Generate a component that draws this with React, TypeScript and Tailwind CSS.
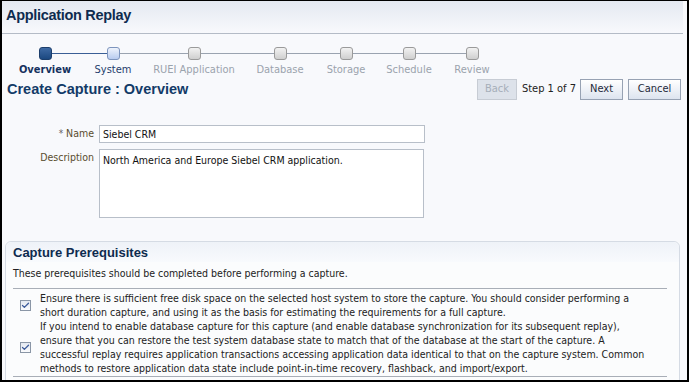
import { Check } from "lucide-react";

const steps = [
  { label: "Overview", state: "current", w: 70 },
  { label: "System", state: "next", w: 66 },
  { label: "RUEI Application", state: "off", w: 96 },
  { label: "Database", state: "off", w: 76 },
  { label: "Storage", state: "off", w: 56 },
  { label: "Schedule", state: "off", w: 70 },
  { label: "Review", state: "off", w: 56 },
];

const Box = ({ state }: { state: string }) => {
  if (state === "current")
    return <div className="w-[13px] h-[13px] rounded-[3px] border border-[#1d3f6c] bg-gradient-to-b from-[#3e6aa4] to-[#1b4880]" />;
  if (state === "next")
    return <div className="w-[13px] h-[13px] rounded-[3px] border border-[#7d94bd] bg-gradient-to-b from-[#eef3fc] to-[#b8cbef]" />;
  return <div className="w-[13px] h-[13px] rounded-[3px] border border-[#9a9a9a] bg-gradient-to-b from-[#f2f2f2] to-[#cfcfcf]" />;
};

const Train = () => (
  <div className="flex pl-[8px] pt-[13px]">
    {steps.map((s, i) => (
      <div key={s.label} className="relative flex flex-col items-center" style={{ width: s.w }}>
        {i < steps.length - 1 && (
          <div
            className={`absolute top-[6px] left-1/2 h-px ${i === 0 ? "bg-[#3a5f96]" : "bg-[#9aa3b0]"}`}
            style={{ width: s.w / 2 + steps[i + 1].w / 2 }}
          />
        )}
        <div className="relative z-10">
          <Box state={s.state} />
        </div>
        <div
          className={`mt-[3px] text-[11px] leading-[14px] whitespace-nowrap ${
            s.state === "current" ? "font-bold text-[#15315e]" : s.state === "next" ? "text-[#1f3d6c]" : "text-[#9ba3ad]"
          }`}
        >
          {s.label}
        </div>
      </div>
    ))}
  </div>
);

const Checkbox = () => (
  <div className="w-[11px] h-[11px] border border-[#8a96a6] bg-gradient-to-b from-[#e4e9f1] to-[#fafbfd] flex items-center justify-center">
    <Check className="w-[9px] h-[9px] text-[#3b5a9a]" strokeWidth={3.5} />
  </div>
);

const bold = { fontFamily: "'Liberation Sans', Arial, sans-serif" };

export default function App() {
  return (
    <div
      className="w-[689px] h-[382px] overflow-hidden border-2 border-t border-black bg-[#f8f9fc] text-[#222]"
      style={{ fontFamily: "'DejaVu Sans Condensed', 'DejaVu Sans', sans-serif" }}
    >
      <div className="h-[33px] bg-gradient-to-b from-[#e4e9f1] to-[#f8f9fc] pl-[4px] pt-[5px] border-b border-[#b4bbc6] mr-[4px]">
        <div className="text-[14.5px] leading-[19px] font-bold text-[#0e2b4f] tracking-[-0.3px]" style={bold}>
          Application Replay
        </div>
      </div>
      <Train />
      <div className="mt-[2px] flex items-center pl-[5px] pr-[6px]">
        <div className="text-[14.5px] font-bold text-[#133b68] leading-[21px] flex-1" style={bold}>
          Create Capture : Overview
        </div>
        <div className="flex items-center text-[11px]">
          <button className="h-[21px] w-[40px] border border-[#c7ccd4] bg-[#dde2ea] text-[#a6aeb9]">Back</button>
          <span className="ml-[5px] mr-[4px] text-[#222]">Step 1 of 7</span>
          <button className="h-[21px] w-[43px] border border-[#97a2b3] bg-gradient-to-b from-[#ffffff] to-[#dde4ef] text-[#1e2a3a]">Next</button>
          <button className="ml-[5px] h-[21px] w-[53px] border border-[#97a2b3] bg-gradient-to-b from-[#ffffff] to-[#dde4ef] text-[#1e2a3a]">Cancel</button>
        </div>
      </div>

      <div className="mt-[25px] flex flex-col gap-[6px] text-[10.5px]">
        <div className="flex items-center">
          <div className="w-[96px] shrink-0 text-right pr-[4px] text-[#5a4d2e]">
            <span className="text-[#666] text-[10px] align-top">*</span> Name
          </div>
          <div className="ml-[1px] w-[326px] h-[18px] border border-[#b8bfc9] bg-white pl-[3px] leading-[16px] text-[#111]">Siebel CRM</div>
        </div>
        <div className="flex items-start">
          <div className="w-[96px] shrink-0 text-right pr-[4px] text-[#5a4d2e] leading-[16px]">Description</div>
          <div className="ml-[1px] w-[325px] h-[69px] border border-[#b8bfc9] bg-white pl-[3px] pt-[2px] leading-[16px] text-[#111]">
            North America and Europe Siebel CRM application.
          </div>
        </div>
      </div>

      <div className="ml-[3px] mr-[7px] mt-[23px] border border-[#d5dbe4] rounded-t-[6px] bg-[#fbfcfd] h-[145px]">
        <div className="h-[20px] rounded-t-[6px] bg-gradient-to-b from-[#eef2f8] to-[#f8fafd] px-[7px] pt-[3px]">
          <div className="text-[13px] font-bold text-[#0e2b4f] leading-[16px]" style={bold}>
            Capture Prerequisites
          </div>
        </div>
        <div className="px-[7px] text-[10.5px] leading-[14px] text-[#222]">
          <div className="pt-[4px]">These prerequisites should be completed before performing a capture.</div>
          <div className="mt-[8px] mr-[5px] border-t border-b border-[#a8aeb7] pt-[2px] pb-[1px]">
            <div className="flex items-center">
              <div className="w-[27px] shrink-0 pl-[7px]"><Checkbox /></div>
              <div className="whitespace-nowrap">
                <div>Ensure there is sufficient free disk space on the selected host system to store the capture. You should consider performing a</div>
                <div>short duration capture, and using it as the basis for estimating the requirements for a full capture.</div>
              </div>
            </div>
            <div className="flex items-center">
              <div className="w-[27px] shrink-0 pl-[7px]"><Checkbox /></div>
              <div className="whitespace-nowrap">
                <div>If you intend to enable database capture for this capture (and enable database synchronization for its subsequent replay),</div>
                <div>ensure that you can restore the test system database state to match that of the database at the start of the capture. A</div>
                <div>successful replay requires application transactions accessing application data identical to that on the capture system. Common</div>
                <div>methods to restore application data state include point-in-time recovery, flashback, and import/export.</div>
              </div>
            </div>
          </div>
        </div>
      </div>
    </div>
  );
}
